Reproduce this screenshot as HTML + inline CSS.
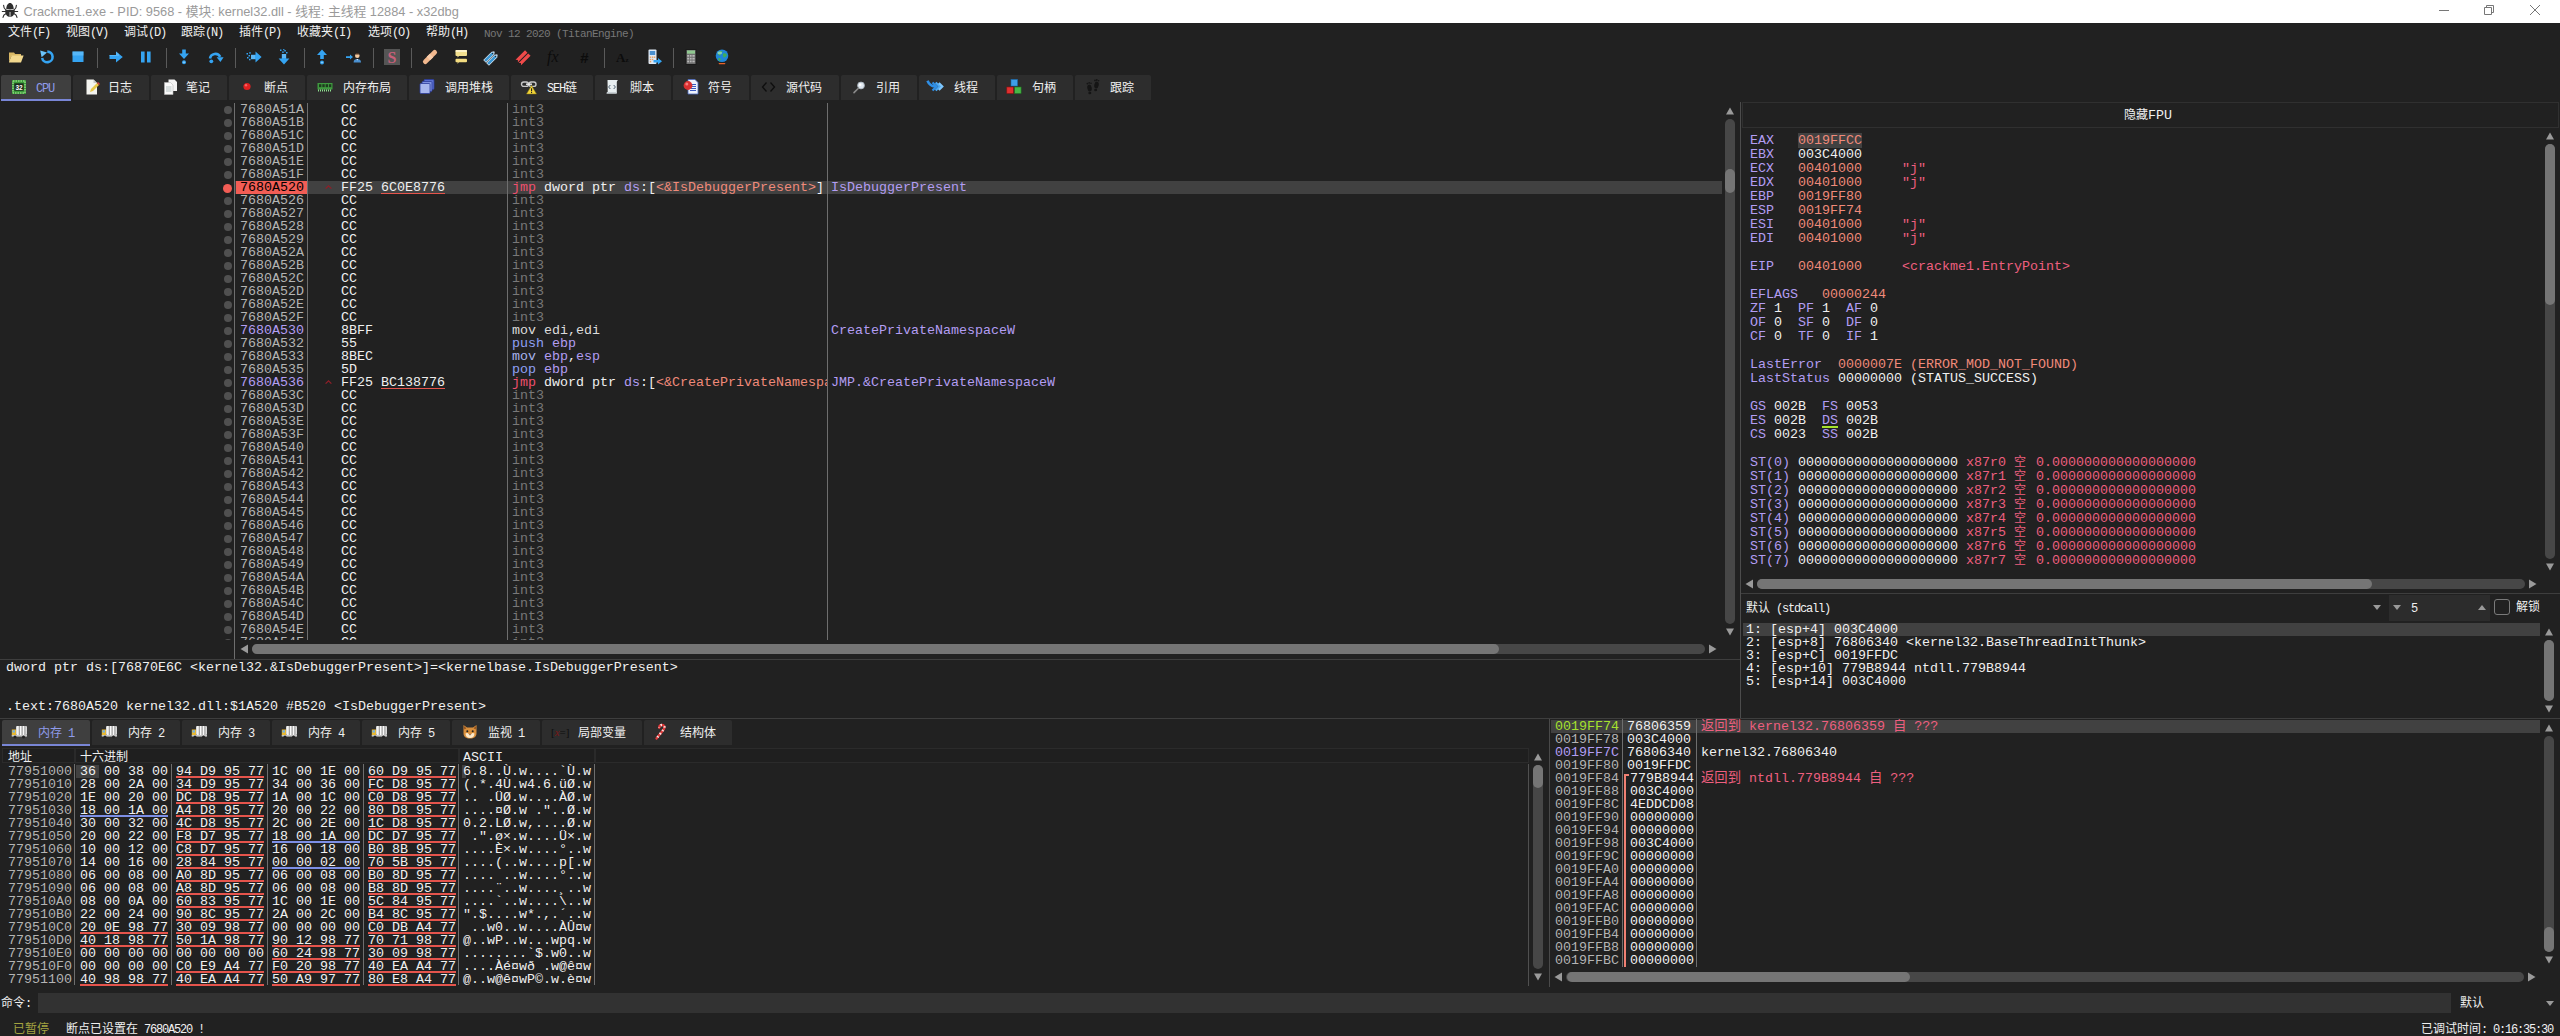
<!DOCTYPE html><html><head><meta charset="utf-8"><title>x32dbg</title><style>
*{box-sizing:border-box;margin:0;padding:0}
html,body{width:2560px;height:1036px;overflow:hidden;background:#212121}
body{position:relative;font-family:"Liberation Sans","Noto Sans CJK SC",sans-serif;font-size:12px;color:#f0f0f0}
.a{position:absolute}
.m{position:absolute;font-family:"Liberation Mono","Noto Sans CJK SC",monospace;font-size:13.333px;line-height:13px;height:13px;white-space:pre;color:#f0f0f0}
.r{position:absolute;font-family:"Liberation Mono","Noto Sans CJK SC",monospace;font-size:13.333px;line-height:14px;height:14px;white-space:pre;color:#f0f0f0}
.u{position:absolute;font-family:"Liberation Sans","Noto Sans CJK SC",sans-serif;font-size:12px;line-height:14px;white-space:pre;color:#f0f0f0}
.la{font-family:"Liberation Mono",monospace;font-size:12px;letter-spacing:-1.2px}
.mf{font-family:"Liberation Mono",monospace;font-size:13.333px}
.cj{font-family:"Noto Sans CJK SC",sans-serif;font-size:12px}
.g{color:#b4b4b4}.d{color:#787878}.p{color:#b39df3}.b{color:#8fa0f5}.k{color:#f0506e}.s{color:#f08a7a}.w{color:#f0f0f0}.pk{color:#ee5f7f}
.vl{position:absolute;width:1px;background:#6e6e6e}
.hl{position:absolute;height:1px;background:#3e3e3e}
.tab{position:absolute;height:25px;background:#2d2d2d;border-radius:2px 2px 0 0}
.tab.sel{background:#3f3f3f;border-bottom:2px solid #7986d6;height:26px}
.tab>span{position:absolute;top:6px;font-size:12px;line-height:14px;white-space:pre}
.sb{position:absolute;background:#474747;border-radius:5px}
.th{position:absolute;background:#757575;border-radius:5px}
.dot{position:absolute;width:7.500px;height:7.500px;border-radius:4px;background:#505050}
.ur{border-bottom:2px solid #e5544c}
.ub{border-bottom:2px solid #7d8fe6}
svg{position:absolute;overflow:visible}
</style></head><body>
<div class="a" style="left:0;top:0;width:2560px;height:23px;background:#fff"></div>
<svg style="left:0;top:0" width="20" height="23" viewBox="0 0 20 23"><path d="M6.3 9C6.3 5.600 8 3 10 3s3.700 2.600 3.700 6c-2.300 .5-5.100 .5-7.400 0z" fill="#2e2e2e"/><path d="M5.200 11c0-.8.500-1.300 1.100-1.300c2.400.5 5 .5 7.400 0c.6 0 1.100.5 1.100 1.300c0 3.500-2 5.800-4.800 5.800s-4.800-2.300-4.800-5.800z" fill="#2e2e2e"/><rect x="9.400" y="11.200" width="1.300" height="5.300" fill="#b0b0b0"/><g fill="none" stroke="#2e2e2e" stroke-width="1.100" stroke-linecap="round"><path d="M6 10C4.300 9 3.600 7 3.600 5.200M14 10c1.700-1 2.400-3 2.400-4.800M2.300 11.500h15.400M5.800 13.800C4 14.600 3.200 16 3 17.400M14.200 13.800c1.800.8 2.600 2.200 2.800 3.600"/></g></svg>
<div class="u" id="title" style="left:23.5px;top:3.800px;font-size:12.8px;line-height:16px;color:#9a9a9a">Crackme1.exe - PID: 9568 - 模块: kernel32.dll - 线程: 主线程 12884 - x32dbg</div>
<svg style="left:2420px;top:0" width="140" height="23" viewBox="0 0 140 23"><g stroke="#777" stroke-width="1" fill="none"><path d="M19 10.5h10"/><path d="M64.5 7.5h7v7h-7zM66.5 7.5v-2h7v7h-2"/><path d="M110 5l10 10M120 5l-10 10"/></g></svg>
<div class="u" style="left:8px;top:25px;line-height:15px">文件<span class="la">(F)</span></div>
<div class="u" style="left:66px;top:25px;line-height:15px">视图<span class="la">(V)</span></div>
<div class="u" style="left:124px;top:25px;line-height:15px">调试<span class="la">(D)</span></div>
<div class="u" style="left:181px;top:25px;line-height:15px">跟踪<span class="la">(N)</span></div>
<div class="u" style="left:239px;top:25px;line-height:15px">插件<span class="la">(P)</span></div>
<div class="u" style="left:297px;top:25px;line-height:15px">收藏夹<span class="la">(I)</span></div>
<div class="u" style="left:368px;top:25px;line-height:15px">选项<span class="la">(O)</span></div>
<div class="u" style="left:426px;top:25px;line-height:15px">帮助<span class="la">(H)</span></div>
<div class="u" style="left:484px;top:27px;line-height:14px;font-size:11px;color:#777;font-family:'Liberation Mono',monospace;letter-spacing:-0.6px">Nov 12 2020 (TitanEngine)</div>
<svg style="left:8px;top:49px" width="16" height="16" viewBox="0 0 16 16"><path d="M1 3.5h5l1.2 1.5H13v2H3.5L1 13z" fill="#d9b865"/><path d="M1 13L3.6 6.5H15.6L13 13.6H1z" fill="#f2d88e"/></svg>
<svg style="left:39px;top:49px" width="16" height="16" viewBox="0 0 16 16"><path d="M8.3 2.6a5.3 5.3 0 1 1-5.2 6.4" fill="none" stroke="#35a4f2" stroke-width="2.6"/><path d="M1.2 1.5L8 3.6L2.6 8.2z" fill="#6cc4fb"/></svg>
<svg style="left:70px;top:49px" width="16" height="16" viewBox="0 0 16 16"><rect x="2.5" y="2.5" width="11" height="10.5" fill="#35a4f2"/><rect x="2.5" y="2.5" width="11" height="4" fill="#6cc4fb" opacity=".6"/></svg>
<svg style="left:108px;top:49px" width="16" height="16" viewBox="0 0 16 16"><path d="M1.5 6h6.5V2.6L14.8 8L8 13.4V10H1.5z" fill="#35a4f2"/><path d="M1.5 6h6.5V2.6L11 5v2H1.5z" fill="#6cc4fb" opacity=".6"/></svg>
<svg style="left:138px;top:49px" width="16" height="16" viewBox="0 0 16 16"><rect x="3" y="2.5" width="3.6" height="11" fill="#35a4f2"/><rect x="9" y="2.5" width="3.6" height="11" fill="#35a4f2"/></svg>
<svg style="left:176px;top:49px" width="16" height="16" viewBox="0 0 16 16"><path d="M6.2 0.5h3.6v4h3.2L8 10L3 4.5h3.2z" fill="#35a4f2"/><circle cx="8" cy="13.2" r="2" fill="#35a4f2"/><circle cx="8" cy="13.2" r=".7" fill="#bfe6ff"/></svg>
<svg style="left:208px;top:49px" width="16" height="16" viewBox="0 0 16 16"><path d="M2 9.5a5.4 5.4 0 0 1 10.2-1.6" fill="none" stroke="#35a4f2" stroke-width="2.6"/><path d="M8.6 8.2h7L12.4 13z" fill="#35a4f2"/><circle cx="3.3" cy="12.3" r="1.9" fill="#35a4f2"/></svg>
<svg style="left:246px;top:49px" width="16" height="16" viewBox="0 0 16 16"><path d="M5 5.8h4.5V2.6L15.6 8L9.5 13.4V10.2H5z" fill="#35a4f2"/><g fill="#35a4f2"><rect x="0.5" y="4" width="1.5" height="1.5"/><rect x="2.5" y="6" width="1.5" height="1.5"/><rect x="1" y="8" width="1.5" height="1.5"/><rect x="3" y="9.8" width="1.5" height="1.5"/><rect x="3.2" y="3.2" width="1.5" height="1.5"/></g><g fill="#d6efff"><rect x="5.5" y="6.5" width="1" height="1"/><rect x="7.5" y="6.5" width="1" height="1"/><rect x="5.5" y="8.5" width="1" height="1"/><rect x="7.5" y="8.5" width="1" height="1"/></g></svg>
<svg style="left:276px;top:49px" width="16" height="16" viewBox="0 0 16 16"><path d="M5.8 5h4.4v4.5h3.2L8 15.6L2.6 9.5h3.2z" fill="#35a4f2"/><g fill="#35a4f2"><rect x="4" y="0.5" width="1.5" height="1.5"/><rect x="6.2" y="2.4" width="1.5" height="1.5"/><rect x="8.3" y="1" width="1.5" height="1.5"/><rect x="10" y="3" width="1.5" height="1.5"/><rect x="7.2" y="0" width="1.2" height="1.2"/></g><g fill="#d6efff"><rect x="6.5" y="5.5" width="1" height="1"/><rect x="8.5" y="5.5" width="1" height="1"/><rect x="6.5" y="7.5" width="1" height="1"/><rect x="8.5" y="7.5" width="1" height="1"/></g></svg>
<svg style="left:314px;top:49px" width="16" height="16" viewBox="0 0 16 16"><path d="M6.2 10h3.6V6h3.2L8 0.5L3 6h3.2z" fill="#35a4f2"/><circle cx="8" cy="13.4" r="2" fill="#35a4f2"/><circle cx="8" cy="13.4" r=".7" fill="#bfe6ff"/></svg>
<svg style="left:346px;top:49px" width="16" height="16" viewBox="0 0 16 16"><path d="M0 7.300h4V5.600L7 8.100L4 10.600V8.900H0z" fill="#35a4f2"/><circle cx="11.300" cy="6.800" r="2.300" fill="#f3c9a0"/><path d="M9.200 5.600a2.200 2.200 0 0 1 4.200 0z" fill="#4a3020"/><path d="M7.600 13.400c0-2.700 1.600-3.500 3.700-3.500s3.700.8 3.700 3.500z" fill="#4a90d0"/><path d="M10.500 10l.8 1.500l.8-1.500z" fill="#fff"/></svg>
<svg style="left:384px;top:49px" width="16" height="16" viewBox="0 0 16 16"><rect x="0" y="0" width="16" height="16" fill="#555"/><text x="8" y="13.500" text-anchor="middle" font-family="Liberation Serif,serif" font-weight="bold" font-size="16" fill="#c8607a">S</text></svg>
<svg style="left:422px;top:49px" width="16" height="16" viewBox="0 0 16 16"><g transform="rotate(-45 8 8)"><rect x="-1" y="5.600" width="18" height="4.800" rx="2.400" fill="#f2b88e"/><rect x="5.800" y="5.600" width="4.400" height="4.800" fill="#f8ccaa"/></g></svg>
<svg style="left:453px;top:49px" width="16" height="16" viewBox="0 0 16 16"><rect x="2.500" y="1" width="11.500" height="6" rx="1" fill="#f3e08e"/><rect x="2.500" y="1" width="11.500" height="2" rx="1" fill="#fdf3c8"/><path d="M4.500 7v1.600l1.600-1.600z" fill="#f3e08e"/><rect x="2.500" y="9.800" width="11.500" height="3.400" rx="1" fill="#f3dc80"/><path d="M4.500 13.200v1.600l1.600-1.600z" fill="#f3dc80"/></svg>
<svg style="left:484px;top:49px" width="16" height="16" viewBox="0 0 16 16"><g transform="rotate(-45 8 8)"><path d="M0 4.300h11l2.200 1.600l-2.200 1.600h-11z" fill="#3b97d3" stroke="#eef7ff" stroke-width=".8"/><path d="M0 8.500h11l2.200 1.600l-2.200 1.600h-11z" fill="#3b97d3" stroke="#eef7ff" stroke-width=".8"/><circle cx="11" cy="5.900" r=".6" fill="#222"/><circle cx="11" cy="10.100" r=".6" fill="#222"/></g></svg>
<svg style="left:516px;top:49px" width="16" height="16" viewBox="0 0 16 16"><g transform="rotate(-45 8 8)"><path d="M0 4h13.500v3.400h-13.500l1.600-1.700z" fill="#f04a4a"/><path d="M0 8.400h13.500v3.400h-13.500l1.600-1.700z" fill="#f04a4a"/></g></svg>
<svg style="left:547px;top:49px" width="16" height="16" viewBox="0 0 16 16"><text x="0" y="13" font-family="Liberation Serif,serif" font-style="italic" font-size="16" fill="#0c0c0c">fx</text></svg>
<svg style="left:578px;top:49px" width="16" height="16" viewBox="0 0 16 16"><text x="2" y="13.5" font-family="Liberation Sans,sans-serif" font-style="italic" font-weight="bold" font-size="15" fill="#0c0c0c">#</text></svg>
<svg style="left:615px;top:49px" width="16" height="16" viewBox="0 0 16 16"><text x="1" y="12.5" font-family="Liberation Serif,serif" font-weight="bold" font-size="13" fill="#0c0c0c">A</text><text x="10.5" y="12.5" font-family="Liberation Serif,serif" font-weight="bold" font-size="7" fill="#0c0c0c">z</text></svg>
<svg style="left:646px;top:49px" width="16" height="16" viewBox="0 0 16 16"><rect x="2.5" y="0.5" width="8" height="14.5" rx="1" fill="#dfe9f5"/><rect x="3.8" y="2" width="5.4" height="4" fill="#4a90d0"/><g fill="#e8a060"><rect x="3.8" y="7.5" width="1.4" height="1.4"/><rect x="5.9" y="7.5" width="1.4" height="1.4"/><rect x="7.9" y="7.5" width="1.4" height="1.4"/><rect x="3.8" y="9.8" width="1.4" height="1.4"/><rect x="5.9" y="9.8" width="1.4" height="1.4"/><rect x="3.8" y="12" width="1.4" height="1.4"/></g><path d="M7.5 11h4.5V9l4 3.3l-4 3.3v-2H7.5z" fill="#35a4f2"/></svg>
<svg style="left:683px;top:49px" width="16" height="16" viewBox="0 0 16 16"><rect x="3" y="0.500" width="10" height="15" fill="#707070" stroke="#1a1a1a" stroke-width="1"/><rect x="4" y="1.500" width="8" height="3.200" fill="#8fc890"/><g fill="#b8b8b8"><rect x="4.200" y="6" width="1.800" height="1.700"/><rect x="6.800" y="6" width="1.800" height="1.700"/><rect x="9.400" y="6" width="2.300" height="1.700"/><rect x="4.200" y="8.800" width="1.800" height="1.700"/><rect x="6.800" y="8.800" width="1.800" height="1.700"/><rect x="9.400" y="8.800" width="2.300" height="1.700"/><rect x="4.200" y="11.600" width="1.800" height="1.700"/><rect x="6.800" y="11.600" width="1.800" height="1.700"/><rect x="9.400" y="11.600" width="2.300" height="1.700"/></g></svg>
<svg style="left:714px;top:49px" width="16" height="16" viewBox="0 0 16 16"><circle cx="8" cy="6.800" r="6.300" fill="#1f86d8"/><path d="M3.500 4c1.500-2 3.500-2.300 5-1.600c-.3 1.700-1.500 2.200-2.300 3.500c-.7 1.100-2 .5-2.700-1.900zM9.300 4.600c1.300-.7 2.800 0 3.700 1.400c-.8 1.700-1.900 2.700-3.300 2.400c-1-1-1.100-2.700-.4-3.800zM4.500 9c1-.4 2 .2 2.500 1.300c-.3.900-1 1.500-1.900 1.600c-.8-.8-1-1.900-.6-2.900z" fill="#3fae5a"/><ellipse cx="5.800" cy="4" rx="2.400" ry="1.400" fill="#cfeeff" opacity=".5"/><rect x="4.600" y="13.900" width="6.800" height="1.400" rx=".7" fill="#e8622a"/></svg>
<div class="a" style="left:97px;top:48px;width:1px;height:20px;background:#5a5a5a"></div>
<div class="a" style="left:166px;top:48px;width:1px;height:20px;background:#5a5a5a"></div>
<div class="a" style="left:235px;top:48px;width:1px;height:20px;background:#5a5a5a"></div>
<div class="a" style="left:304px;top:48px;width:1px;height:20px;background:#5a5a5a"></div>
<div class="a" style="left:373px;top:48px;width:1px;height:20px;background:#5a5a5a"></div>
<div class="a" style="left:411px;top:48px;width:1px;height:20px;background:#5a5a5a"></div>
<div class="a" style="left:604px;top:48px;width:1px;height:20px;background:#5a5a5a"></div>
<div class="a" style="left:673px;top:48px;width:1px;height:20px;background:#5a5a5a"></div>
<div class="tab sel" style="left:1px;top:75px;width:70px"><span style="left:35px;color:#8f9bea"><span class="la">CPU</span></span></div>
<div class="tab" style="left:73px;top:75px;width:76px"><span style="left:35px;color:#f0f0f0">日志</span></div>
<div class="tab" style="left:151px;top:75px;width:76px"><span style="left:35px;color:#f0f0f0">笔记</span></div>
<div class="tab" style="left:229px;top:75px;width:76px"><span style="left:35px;color:#f0f0f0">断点</span></div>
<div class="tab" style="left:307px;top:75px;width:100px"><span style="left:36px;color:#f0f0f0">内存布局</span></div>
<div class="tab" style="left:409px;top:75px;width:100px"><span style="left:36px;color:#f0f0f0">调用堆栈</span></div>
<div class="tab" style="left:511px;top:75px;width:82px"><span style="left:36px;color:#f0f0f0"><span class="la">SEH</span>链</span></div>
<div class="tab" style="left:595px;top:75px;width:76px"><span style="left:35px;color:#f0f0f0">脚本</span></div>
<div class="tab" style="left:673px;top:75px;width:76px"><span style="left:35px;color:#f0f0f0">符号</span></div>
<div class="tab" style="left:751px;top:75px;width:88px"><span style="left:35px;color:#f0f0f0">源代码</span></div>
<div class="tab" style="left:841px;top:75px;width:76px"><span style="left:35px;color:#f0f0f0">引用</span></div>
<div class="tab" style="left:919px;top:75px;width:76px"><span style="left:35px;color:#f0f0f0">线程</span></div>
<div class="tab" style="left:997px;top:75px;width:76px"><span style="left:35px;color:#f0f0f0">句柄</span></div>
<div class="tab" style="left:1075px;top:75px;width:76px"><span style="left:35px;color:#f0f0f0">跟踪</span></div>
<svg style="left:11px;top:79px" width="16" height="16" viewBox="0 0 16 16"><rect x="1" y="1" width="14" height="14" fill="#3a9a3a"/><rect x="2" y="2" width="12" height="12" fill="none" stroke="#b8f0a0" stroke-width="1" stroke-dasharray="1.5 1"/><rect x="3.3" y="4.3" width="9.4" height="7.4" fill="#1c2a1c"/><text x="8" y="10.6" text-anchor="middle" font-family="Liberation Sans,sans-serif" font-weight="bold" font-size="6.5" fill="#fff">32</text></svg>
<svg style="left:84px;top:79px" width="16" height="16" viewBox="0 0 16 16"><path d="M2.5 0.5h7l3.5 3.5v11.5h-10.5z" fill="#f4f4f0"/><path d="M9.5 0.5v3.5h3.5z" fill="#c8c8c8"/><path d="M6 13l1-3l6-6l2 2l-6 6z" fill="#e8c84a"/><path d="M13 4l1-1l2 2l-1 1z" fill="#d84040"/></svg>
<svg style="left:163px;top:79px" width="16" height="16" viewBox="0 0 16 16"><path d="M5.5 0.5h6l2.5 2.5v9h-8.5z" fill="#f4f4f4"/><path d="M1.5 3.5h6l2.5 2.5v9.5h-8.5z" fill="#fafafa" stroke="#bbb" stroke-width=".6"/><g stroke="#9aa" stroke-width=".7"><path d="M3 8h5.5M3 10h5.5M3 12h5.5"/></g></svg>
<svg style="left:239px;top:79px" width="16" height="16" viewBox="0 0 16 16"><circle cx="8" cy="7.5" r="3.6" fill="#e02020"/><circle cx="7" cy="6.3" r="1.2" fill="#ff8080" opacity=".7"/></svg>
<svg style="left:317px;top:79px" width="16" height="16" viewBox="0 0 16 16"><rect x="0.5" y="4" width="15" height="6.5" fill="#3f9a3f"/><g fill="#1e3a1e"><rect x="2" y="5.2" width="2.4" height="3"/><rect x="5.3" y="5.2" width="2.4" height="3"/><rect x="8.6" y="5.2" width="2.4" height="3"/><rect x="11.9" y="5.2" width="2.4" height="3"/></g><g fill="#8fe08f"><rect x="1" y="10.5" width="1" height="2"/><rect x="3" y="10.5" width="1" height="2"/><rect x="5" y="10.5" width="1" height="2"/><rect x="7" y="10.5" width="1" height="2"/><rect x="9" y="10.5" width="1" height="2"/><rect x="11" y="10.5" width="1" height="2"/><rect x="13" y="10.5" width="1" height="2"/></g></svg>
<svg style="left:419px;top:79px" width="16" height="16" viewBox="0 0 16 16"><rect x="5" y="0.5" width="10" height="10" rx="1" fill="#5a6fd0" stroke="#2c3c9c" stroke-width=".8"/><rect x="3" y="2.5" width="10" height="10" rx="1" fill="#7f92e0" stroke="#2c3c9c" stroke-width=".8"/><rect x="1" y="4.5" width="10" height="10" rx="1" fill="#a9b8ee" stroke="#2c3c9c" stroke-width=".8"/></svg>
<svg style="left:521px;top:79px" width="16" height="16" viewBox="0 0 16 16"><rect x="0.5" y="3" width="7" height="4.4" rx="2.2" fill="none" stroke="#c8c8c8" stroke-width="1.4"/><rect x="8" y="3" width="7" height="4.4" rx="2.2" fill="none" stroke="#c8c8c8" stroke-width="1.4"/><path d="M5 5.2h6" stroke="#eee" stroke-width="1.4"/><path d="M10.5 6.5L15.5 15h-10z" fill="#f2d43a" stroke="#8a7a10" stroke-width=".5"/><rect x="10" y="9.3" width="1.1" height="3" fill="#222"/><rect x="10" y="13" width="1.1" height="1.1" fill="#222"/></svg>
<svg style="left:604px;top:79px" width="16" height="16" viewBox="0 0 16 16"><path d="M3.5 1h10.5c-1.2.8-1.2 2 -1.2 3v10.5h-10c1-.8 .9-1.6.9-2.5z" fill="#e8eef0"/><path d="M1.5 14.5h10.5c.8 0 1-.8.8-1.5h-10c.3.8-.3 1.5-1.3 1.5z" fill="#c8d0d4"/><path d="M6.3 6L4.6 8l1.7 2M9.7 6l1.7 2l-1.7 2" fill="none" stroke="#506070" stroke-width="1"/></svg>
<svg style="left:683px;top:79px" width="16" height="16" viewBox="0 0 16 16"><path d="M5 0.5h7l3 3v11.5h-10z" fill="#eef2fb" stroke="#4a6ac0" stroke-width=".8"/><g stroke="#3a5ac0" stroke-width="1"><path d="M8 5.5h5M8 7.5h5M8 9.5h5M7 11.5h6"/></g><circle cx="5" cy="6.5" r="4.4" fill="#d83030"/><circle cx="3.8" cy="5" r="1.5" fill="#ff9090" opacity=".8"/></svg>
<svg style="left:761px;top:79px" width="16" height="16" viewBox="0 0 16 16"><path d="M5.500 3.500L1.500 8L5.500 12.500M9.500 3.500L13.500 8L9.500 12.500" fill="none" stroke="#0e0e0e" stroke-width="1.300"/></svg>
<svg style="left:851px;top:79px" width="16" height="16" viewBox="0 0 16 16"><circle cx="10" cy="6.500" r="3.400" fill="#dfe8f0" stroke="#aab4be" stroke-width=".9"/><circle cx="9.200" cy="5.700" r="1.300" fill="#fff"/><path d="M7.400 9.200L3 13.600" stroke="#8a8a8a" stroke-width="1.600" stroke-linecap="round"/></svg>
<svg style="left:927px;top:79px" width="16" height="16" viewBox="0 0 16 16"><path d="M0.500 1.800C2 5.500 4.500 7.200 8 7.500" fill="none" stroke="#2f8fe6" stroke-width="2.600"/><g fill="none" stroke-width="2.200"><path d="M5.500 3.500L9.500 7.500L5.500 11.500" stroke="#2f8fe6"/><path d="M8.700 3.500L12.700 7.500L8.700 11.500" stroke="#49a8f5"/><path d="M11.800 4L15.300 7.500L11.800 11" stroke="#7cc6ff"/></g></svg>
<svg style="left:1006px;top:79px" width="16" height="16" viewBox="0 0 16 16"><rect x="5" y="0.5" width="6.5" height="6.5" fill="#3f9fe8" stroke="#1a6ab0" stroke-width=".6"/><rect x="0.8" y="8" width="6.5" height="6.5" fill="#e03030" stroke="#901010" stroke-width=".6"/><rect x="8.6" y="8" width="6.5" height="6.5" fill="#48b848" stroke="#207020" stroke-width=".6"/></svg>
<svg style="left:1085px;top:79px" width="16" height="16" viewBox="0 0 16 16"><g fill="#151515"><ellipse cx="4.5" cy="9" rx="2.2" ry="3.4" transform="rotate(-12 4.5 9)"/><ellipse cx="4.8" cy="14" rx="1.5" ry="1.2"/><circle cx="2.4" cy="4.6" r=".9"/><circle cx="4.2" cy="3.8" r=".9"/><circle cx="6" cy="4.2" r=".8"/><ellipse cx="11.5" cy="6" rx="2.2" ry="3.4" transform="rotate(12 11.5 6)"/><ellipse cx="10.6" cy="11" rx="1.5" ry="1.2"/><circle cx="10" cy="1.4" r=".9"/><circle cx="11.8" cy="1" r=".9"/><circle cx="13.6" cy="1.8" r=".8"/></g></svg>
<div class="a" id="dis" style="left:0;top:103px;width:1722px;height:537px;overflow:hidden">
<div class="a" style="left:234px;top:78px;width:1488px;height:13px;background:#414141"></div>
<div class="a" style="left:236px;top:78px;width:71px;height:13px;background:#f25d55"></div>
<div class="vl" style="left:234px;top:0;height:537px"></div>
<div class="vl" style="left:307px;top:0;height:537px"></div>
<div class="vl" style="left:507px;top:0;height:537px"></div>
<div class="vl" style="left:827px;top:0;height:537px"></div>
<div class="a" style="left:508px;top:0;width:319px;height:537px;overflow:hidden">
<div class="m d" style="left:4px;top:0px">int3</div>
<div class="m d" style="left:4px;top:13px">int3</div>
<div class="m d" style="left:4px;top:26px">int3</div>
<div class="m d" style="left:4px;top:39px">int3</div>
<div class="m d" style="left:4px;top:52px">int3</div>
<div class="m d" style="left:4px;top:65px">int3</div>
<div class="m w" style="left:4px;top:78px"><span class="k">jmp</span> dword ptr <span class="p">ds</span>:[<span class="s">&lt;&amp;IsDebuggerPresent&gt;</span>]</div>
<div class="m d" style="left:4px;top:91px">int3</div>
<div class="m d" style="left:4px;top:104px">int3</div>
<div class="m d" style="left:4px;top:117px">int3</div>
<div class="m d" style="left:4px;top:130px">int3</div>
<div class="m d" style="left:4px;top:143px">int3</div>
<div class="m d" style="left:4px;top:156px">int3</div>
<div class="m d" style="left:4px;top:169px">int3</div>
<div class="m d" style="left:4px;top:182px">int3</div>
<div class="m d" style="left:4px;top:195px">int3</div>
<div class="m d" style="left:4px;top:208px">int3</div>
<div class="m w" style="left:4px;top:221px"><span style="color:#dcdcdc">mov edi,edi</span></div>
<div class="m w" style="left:4px;top:234px"><span class="b">push</span> <span class="p">ebp</span></div>
<div class="m w" style="left:4px;top:247px"><span style="color:#a9b4ee">mov</span> <span class="p">ebp</span>,<span class="p">esp</span></div>
<div class="m w" style="left:4px;top:260px"><span class="b">pop</span> <span class="p">ebp</span></div>
<div class="m w" style="left:4px;top:273px"><span class="k">jmp</span> dword ptr <span class="p">ds</span>:[<span class="s">&lt;&amp;CreatePrivateNamespaceW&gt;</span>]</div>
<div class="m d" style="left:4px;top:286px">int3</div>
<div class="m d" style="left:4px;top:299px">int3</div>
<div class="m d" style="left:4px;top:312px">int3</div>
<div class="m d" style="left:4px;top:325px">int3</div>
<div class="m d" style="left:4px;top:338px">int3</div>
<div class="m d" style="left:4px;top:351px">int3</div>
<div class="m d" style="left:4px;top:364px">int3</div>
<div class="m d" style="left:4px;top:377px">int3</div>
<div class="m d" style="left:4px;top:390px">int3</div>
<div class="m d" style="left:4px;top:403px">int3</div>
<div class="m d" style="left:4px;top:416px">int3</div>
<div class="m d" style="left:4px;top:429px">int3</div>
<div class="m d" style="left:4px;top:442px">int3</div>
<div class="m d" style="left:4px;top:455px">int3</div>
<div class="m d" style="left:4px;top:468px">int3</div>
<div class="m d" style="left:4px;top:481px">int3</div>
<div class="m d" style="left:4px;top:494px">int3</div>
<div class="m d" style="left:4px;top:507px">int3</div>
<div class="m d" style="left:4px;top:520px">int3</div>
<div class="m d" style="left:4px;top:533px">int3</div>
</div>
<div class="dot" style="left:224px;top:3px"></div>
<div class="m g" style="left:240px;top:0px">7680A51A</div>
<div class="m" style="left:341px;top:0px">CC</div>
<div class="dot" style="left:224px;top:16px"></div>
<div class="m g" style="left:240px;top:13px">7680A51B</div>
<div class="m" style="left:341px;top:13px">CC</div>
<div class="dot" style="left:224px;top:29px"></div>
<div class="m g" style="left:240px;top:26px">7680A51C</div>
<div class="m" style="left:341px;top:26px">CC</div>
<div class="dot" style="left:224px;top:42px"></div>
<div class="m g" style="left:240px;top:39px">7680A51D</div>
<div class="m" style="left:341px;top:39px">CC</div>
<div class="dot" style="left:224px;top:55px"></div>
<div class="m g" style="left:240px;top:52px">7680A51E</div>
<div class="m" style="left:341px;top:52px">CC</div>
<div class="dot" style="left:224px;top:68px"></div>
<div class="m g" style="left:240px;top:65px">7680A51F</div>
<div class="m" style="left:341px;top:65px">CC</div>
<div class="dot" style="left:223px;top:81px;width:9px;height:9px;border-radius:5px;background:#f25d55"></div>
<div class="m" style="left:240px;top:78px;color:#000">7680A520</div>
<div class="a" style="left:381px;top:90px;width:64px;height:1px;background:#e5544c"></div>
<div class="m" style="left:341px;top:78px">FF25 6C0E8776</div>
<svg style="left:325px;top:82px" width="7" height="4" viewBox="0 0 7 4"><path d="M0.600 3.600L3.500 0.800L6.400 3.600" fill="none" stroke="#8f1f28" stroke-width="1.300"/></svg>
<div class="m p" style="left:831px;top:78px">IsDebuggerPresent</div>
<div class="dot" style="left:224px;top:94px"></div>
<div class="m g" style="left:240px;top:91px">7680A526</div>
<div class="m" style="left:341px;top:91px">CC</div>
<div class="dot" style="left:224px;top:107px"></div>
<div class="m g" style="left:240px;top:104px">7680A527</div>
<div class="m" style="left:341px;top:104px">CC</div>
<div class="dot" style="left:224px;top:120px"></div>
<div class="m g" style="left:240px;top:117px">7680A528</div>
<div class="m" style="left:341px;top:117px">CC</div>
<div class="dot" style="left:224px;top:133px"></div>
<div class="m g" style="left:240px;top:130px">7680A529</div>
<div class="m" style="left:341px;top:130px">CC</div>
<div class="dot" style="left:224px;top:146px"></div>
<div class="m g" style="left:240px;top:143px">7680A52A</div>
<div class="m" style="left:341px;top:143px">CC</div>
<div class="dot" style="left:224px;top:159px"></div>
<div class="m g" style="left:240px;top:156px">7680A52B</div>
<div class="m" style="left:341px;top:156px">CC</div>
<div class="dot" style="left:224px;top:172px"></div>
<div class="m g" style="left:240px;top:169px">7680A52C</div>
<div class="m" style="left:341px;top:169px">CC</div>
<div class="dot" style="left:224px;top:185px"></div>
<div class="m g" style="left:240px;top:182px">7680A52D</div>
<div class="m" style="left:341px;top:182px">CC</div>
<div class="dot" style="left:224px;top:198px"></div>
<div class="m g" style="left:240px;top:195px">7680A52E</div>
<div class="m" style="left:341px;top:195px">CC</div>
<div class="dot" style="left:224px;top:211px"></div>
<div class="m g" style="left:240px;top:208px">7680A52F</div>
<div class="m" style="left:341px;top:208px">CC</div>
<div class="dot" style="left:224px;top:224px"></div>
<div class="m p" style="left:240px;top:221px">7680A530</div>
<div class="m" style="left:341px;top:221px">8BFF</div>
<div class="m p" style="left:831px;top:221px">CreatePrivateNamespaceW</div>
<div class="dot" style="left:224px;top:237px"></div>
<div class="m g" style="left:240px;top:234px">7680A532</div>
<div class="m" style="left:341px;top:234px">55</div>
<div class="dot" style="left:224px;top:250px"></div>
<div class="m g" style="left:240px;top:247px">7680A533</div>
<div class="m" style="left:341px;top:247px">8BEC</div>
<div class="dot" style="left:224px;top:263px"></div>
<div class="m g" style="left:240px;top:260px">7680A535</div>
<div class="m" style="left:341px;top:260px">5D</div>
<div class="dot" style="left:224px;top:276px"></div>
<div class="m p" style="left:240px;top:273px">7680A536</div>
<div class="a" style="left:381px;top:285px;width:64px;height:1px;background:#e5544c"></div>
<div class="m" style="left:341px;top:273px">FF25 BC138776</div>
<svg style="left:325px;top:277px" width="7" height="4" viewBox="0 0 7 4"><path d="M0.600 3.600L3.500 0.800L6.400 3.600" fill="none" stroke="#8f1f28" stroke-width="1.300"/></svg>
<div class="m p" style="left:831px;top:273px">JMP.&amp;CreatePrivateNamespaceW</div>
<div class="dot" style="left:224px;top:289px"></div>
<div class="m g" style="left:240px;top:286px">7680A53C</div>
<div class="m" style="left:341px;top:286px">CC</div>
<div class="dot" style="left:224px;top:302px"></div>
<div class="m g" style="left:240px;top:299px">7680A53D</div>
<div class="m" style="left:341px;top:299px">CC</div>
<div class="dot" style="left:224px;top:315px"></div>
<div class="m g" style="left:240px;top:312px">7680A53E</div>
<div class="m" style="left:341px;top:312px">CC</div>
<div class="dot" style="left:224px;top:328px"></div>
<div class="m g" style="left:240px;top:325px">7680A53F</div>
<div class="m" style="left:341px;top:325px">CC</div>
<div class="dot" style="left:224px;top:341px"></div>
<div class="m g" style="left:240px;top:338px">7680A540</div>
<div class="m" style="left:341px;top:338px">CC</div>
<div class="dot" style="left:224px;top:354px"></div>
<div class="m g" style="left:240px;top:351px">7680A541</div>
<div class="m" style="left:341px;top:351px">CC</div>
<div class="dot" style="left:224px;top:367px"></div>
<div class="m g" style="left:240px;top:364px">7680A542</div>
<div class="m" style="left:341px;top:364px">CC</div>
<div class="dot" style="left:224px;top:380px"></div>
<div class="m g" style="left:240px;top:377px">7680A543</div>
<div class="m" style="left:341px;top:377px">CC</div>
<div class="dot" style="left:224px;top:393px"></div>
<div class="m g" style="left:240px;top:390px">7680A544</div>
<div class="m" style="left:341px;top:390px">CC</div>
<div class="dot" style="left:224px;top:406px"></div>
<div class="m g" style="left:240px;top:403px">7680A545</div>
<div class="m" style="left:341px;top:403px">CC</div>
<div class="dot" style="left:224px;top:419px"></div>
<div class="m g" style="left:240px;top:416px">7680A546</div>
<div class="m" style="left:341px;top:416px">CC</div>
<div class="dot" style="left:224px;top:432px"></div>
<div class="m g" style="left:240px;top:429px">7680A547</div>
<div class="m" style="left:341px;top:429px">CC</div>
<div class="dot" style="left:224px;top:445px"></div>
<div class="m g" style="left:240px;top:442px">7680A548</div>
<div class="m" style="left:341px;top:442px">CC</div>
<div class="dot" style="left:224px;top:458px"></div>
<div class="m g" style="left:240px;top:455px">7680A549</div>
<div class="m" style="left:341px;top:455px">CC</div>
<div class="dot" style="left:224px;top:471px"></div>
<div class="m g" style="left:240px;top:468px">7680A54A</div>
<div class="m" style="left:341px;top:468px">CC</div>
<div class="dot" style="left:224px;top:484px"></div>
<div class="m g" style="left:240px;top:481px">7680A54B</div>
<div class="m" style="left:341px;top:481px">CC</div>
<div class="dot" style="left:224px;top:497px"></div>
<div class="m g" style="left:240px;top:494px">7680A54C</div>
<div class="m" style="left:341px;top:494px">CC</div>
<div class="dot" style="left:224px;top:510px"></div>
<div class="m g" style="left:240px;top:507px">7680A54D</div>
<div class="m" style="left:341px;top:507px">CC</div>
<div class="dot" style="left:224px;top:523px"></div>
<div class="m g" style="left:240px;top:520px">7680A54E</div>
<div class="m" style="left:341px;top:520px">CC</div>
<div class="dot" style="left:224px;top:536px"></div>
<div class="m g" style="left:240px;top:533px">7680A54F</div>
<div class="m" style="left:341px;top:533px">CC</div>
</div>
<svg style="left:1725px;top:107px" width="10" height="8" viewBox="0 0 10 8"><path d="M5 0.5L9 7.5H1z" fill="#9a9a9a"/></svg>
<div class="sb" style="left:1725px;top:119px;width:10px;height:505px"></div>
<div class="th" style="left:1725px;top:169px;width:10px;height:24px"></div>
<svg style="left:1725px;top:628px" width="10" height="8" viewBox="0 0 10 8"><path d="M5 7.5L9 0.5H1z" fill="#9a9a9a"/></svg>
<svg style="left:240px;top:644px" width="8" height="10" viewBox="0 0 8 10"><path d="M0.5 5L8 0.5V9.5z" fill="#9a9a9a"/></svg>
<div class="sb" style="left:252px;top:644px;width:1453px;height:10px"></div>
<div class="th" style="left:252px;top:644px;width:1247px;height:10px"></div>
<svg style="left:1709px;top:644px" width="8" height="10" viewBox="0 0 8 10"><path d="M7.5 5L0 0.5V9.5z" fill="#9a9a9a"/></svg>
<div class="vl" style="left:234px;top:640px;height:19px"></div>
<div class="hl" style="left:0;top:659px;width:1741px"></div>
<div class="hl" style="left:0;top:718px;width:2560px"></div>
<div class="a" style="left:1740px;top:102px;width:1px;height:616px;background:#4c4c4c"></div>
<div class="m" style="left:6px;top:661px">dword ptr ds:[76870E6C &lt;kernel32.&amp;IsDebuggerPresent&gt;]=&lt;kernelbase.IsDebuggerPresent&gt;</div>
<div class="m" style="left:6px;top:700px">.text:7680A520 kernel32.dll:$1A520 #B520 &lt;IsDebuggerPresent&gt;</div>
<div class="tab sel" style="left:2px;top:720px;width:88px"><span style="left:36px;color:#8f9bea">内存<span class="la"> 1</span></span></div>
<div class="tab" style="left:92px;top:720px;width:88px"><span style="left:36px;color:#f0f0f0">内存<span class="la"> 2</span></span></div>
<div class="tab" style="left:182px;top:720px;width:88px"><span style="left:36px;color:#f0f0f0">内存<span class="la"> 3</span></span></div>
<div class="tab" style="left:272px;top:720px;width:88px"><span style="left:36px;color:#f0f0f0">内存<span class="la"> 4</span></span></div>
<div class="tab" style="left:362px;top:720px;width:88px"><span style="left:36px;color:#f0f0f0">内存<span class="la"> 5</span></span></div>
<div class="tab" style="left:452px;top:720px;width:88px"><span style="left:36px;color:#f0f0f0">监视<span class="la"> 1</span></span></div>
<div class="tab" style="left:542px;top:720px;width:100px"><span style="left:36px;color:#f0f0f0">局部变量</span></div>
<div class="tab" style="left:644px;top:720px;width:88px"><span style="left:36px;color:#f0f0f0">结构体</span></div>
<svg style="left:11px;top:724px" width="16" height="16" viewBox="0 0 16 16"><rect x="5" y="2" width="11" height="9" rx="1" fill="#d8d8d8"/><g fill="#fafafa"><rect x="6.2" y="2" width="1.5" height="9"/><rect x="9" y="2" width="1.5" height="9"/><rect x="11.8" y="2" width="1.5" height="9"/></g><g fill="#9a9a9a"><rect x="7.8" y="2" width="1" height="9"/><rect x="10.6" y="2" width="1" height="9"/><rect x="13.4" y="2" width="1" height="9"/></g><path d="M0.8 5.5h4.2v6.500h-4.2z" fill="#e8b830"/><rect x="1.500" y="6.300" width="2.400" height="2.200" fill="#6ab0e8"/><rect x="0.800" y="11" width="15.200" height="1.600" fill="#c8c8c8"/><circle cx="4" cy="13" r="1.500" fill="#222"/><circle cx="12.500" cy="13" r="1.500" fill="#222"/></svg>
<svg style="left:101px;top:724px" width="16" height="16" viewBox="0 0 16 16"><rect x="5" y="2" width="11" height="9" rx="1" fill="#d8d8d8"/><g fill="#fafafa"><rect x="6.2" y="2" width="1.5" height="9"/><rect x="9" y="2" width="1.5" height="9"/><rect x="11.8" y="2" width="1.5" height="9"/></g><g fill="#9a9a9a"><rect x="7.8" y="2" width="1" height="9"/><rect x="10.6" y="2" width="1" height="9"/><rect x="13.4" y="2" width="1" height="9"/></g><path d="M0.8 5.5h4.2v6.500h-4.2z" fill="#e8b830"/><rect x="1.500" y="6.300" width="2.400" height="2.200" fill="#6ab0e8"/><rect x="0.800" y="11" width="15.200" height="1.600" fill="#c8c8c8"/><circle cx="4" cy="13" r="1.500" fill="#222"/><circle cx="12.500" cy="13" r="1.500" fill="#222"/></svg>
<svg style="left:191px;top:724px" width="16" height="16" viewBox="0 0 16 16"><rect x="5" y="2" width="11" height="9" rx="1" fill="#d8d8d8"/><g fill="#fafafa"><rect x="6.2" y="2" width="1.5" height="9"/><rect x="9" y="2" width="1.5" height="9"/><rect x="11.8" y="2" width="1.5" height="9"/></g><g fill="#9a9a9a"><rect x="7.8" y="2" width="1" height="9"/><rect x="10.6" y="2" width="1" height="9"/><rect x="13.4" y="2" width="1" height="9"/></g><path d="M0.8 5.5h4.2v6.500h-4.2z" fill="#e8b830"/><rect x="1.500" y="6.300" width="2.400" height="2.200" fill="#6ab0e8"/><rect x="0.800" y="11" width="15.200" height="1.600" fill="#c8c8c8"/><circle cx="4" cy="13" r="1.500" fill="#222"/><circle cx="12.500" cy="13" r="1.500" fill="#222"/></svg>
<svg style="left:281px;top:724px" width="16" height="16" viewBox="0 0 16 16"><rect x="5" y="2" width="11" height="9" rx="1" fill="#d8d8d8"/><g fill="#fafafa"><rect x="6.2" y="2" width="1.5" height="9"/><rect x="9" y="2" width="1.5" height="9"/><rect x="11.8" y="2" width="1.5" height="9"/></g><g fill="#9a9a9a"><rect x="7.8" y="2" width="1" height="9"/><rect x="10.6" y="2" width="1" height="9"/><rect x="13.4" y="2" width="1" height="9"/></g><path d="M0.8 5.5h4.2v6.500h-4.2z" fill="#e8b830"/><rect x="1.500" y="6.300" width="2.400" height="2.200" fill="#6ab0e8"/><rect x="0.800" y="11" width="15.200" height="1.600" fill="#c8c8c8"/><circle cx="4" cy="13" r="1.500" fill="#222"/><circle cx="12.500" cy="13" r="1.500" fill="#222"/></svg>
<svg style="left:371px;top:724px" width="16" height="16" viewBox="0 0 16 16"><rect x="5" y="2" width="11" height="9" rx="1" fill="#d8d8d8"/><g fill="#fafafa"><rect x="6.2" y="2" width="1.5" height="9"/><rect x="9" y="2" width="1.5" height="9"/><rect x="11.8" y="2" width="1.5" height="9"/></g><g fill="#9a9a9a"><rect x="7.8" y="2" width="1" height="9"/><rect x="10.6" y="2" width="1" height="9"/><rect x="13.4" y="2" width="1" height="9"/></g><path d="M0.8 5.5h4.2v6.500h-4.2z" fill="#e8b830"/><rect x="1.500" y="6.300" width="2.400" height="2.200" fill="#6ab0e8"/><rect x="0.800" y="11" width="15.200" height="1.600" fill="#c8c8c8"/><circle cx="4" cy="13" r="1.500" fill="#222"/><circle cx="12.500" cy="13" r="1.500" fill="#222"/></svg>
<svg style="left:462px;top:724px" width="16" height="16" viewBox="0 0 16 16"><path d="M1.500 1l3.500 2.500h6l3.500-2.500v8c0 4-2.500 5.500-6.500 5.500s-6.500-1.500-6.500-5.500z" fill="#d98f3c"/><path d="M2 2l2.300 2.200l-2 1.300z M14 2l-2.300 2.200l2 1.300z" fill="#8a4a1a"/><path d="M3.500 9.500c0 3 2 4.500 4.500 4.500s4.500-1.500 4.500-4.500c-1.500-1-2.500-.5-3.200.8h-2.600c-.7-1.300-1.700-1.800-3.200-.8z" fill="#fbe9cc"/><circle cx="5.300" cy="7.200" r="1" fill="#222"/><circle cx="10.700" cy="7.200" r="1" fill="#222"/><path d="M7.100 10.300h1.800l-.9 1.100z" fill="#402010"/></svg>
<svg style="left:551px;top:724px" width="16" height="16" viewBox="0 0 16 16"><text x="0" y="12" font-family="Liberation Serif,serif" font-size="11" fill="#0e0e0e">[<tspan fill="#7a1515" font-style="italic">x</tspan>=]</text></svg>
<svg style="left:653px;top:724px" width="16" height="16" viewBox="0 0 16 16"><path d="M3.500 14.500L10.800 5.200C12.300 3.200 11.200 1 9 1C7.300 1 6.200 2.200 6.200 3.800" fill="none" stroke="#e23b3b" stroke-width="2.300" stroke-linecap="round"/><path d="M3.500 14.500L10.800 5.200C12.300 3.200 11.200 1 9 1C7.300 1 6.200 2.200 6.200 3.800" fill="none" stroke="#ffe6e6" stroke-width="2.300" stroke-dasharray="1.400 2.600" stroke-dashoffset="-1.500"/></svg>
<div class="a" style="left:2px;top:748px;width:1527px;height:15px;background:#1f1f1f;border:1px solid #2b2b2b"></div>
<div class="a" style="left:74px;top:749px;width:2px;height:13px;background:#2a2a2a"></div>
<div class="a" style="left:458px;top:749px;width:2px;height:13px;background:#2a2a2a"></div>
<div class="a" style="left:594px;top:749px;width:2px;height:13px;background:#2a2a2a"></div>
<div class="u" style="left:8px;top:750px;line-height:14px">地址</div>
<div class="u" style="left:80px;top:750px;line-height:14px">十六进制</div>
<div class="m" style="left:463px;top:751px">ASCII</div>
<div class="a" id="dump" style="left:0;top:764px;width:1530px;height:223px;overflow:hidden">
<div class="vl" style="left:74px;top:0;height:221px"></div>
<div class="vl" style="left:171px;top:0;height:221px"></div>
<div class="vl" style="left:267px;top:0;height:221px"></div>
<div class="vl" style="left:363px;top:0;height:221px"></div>
<div class="vl" style="left:458px;top:0;height:221px"></div>
<div class="vl" style="left:594px;top:0;height:221px"></div>
<div class="a" style="left:76px;top:1px;width:23px;height:13px;background:#414141"></div>
<div class="a" style="left:462px;top:1px;width:4px;height:13px;background:#414141"></div>
<div class="m g" style="left:8px;top:1px">77951000</div>
<div class="m" style="left:80px;top:1px;height:13px;width:88px">36 00 38 00</div>
<div class="m ur" style="left:176px;top:1px;height:13px;width:88px">94 D9 95 77</div>
<div class="m" style="left:272px;top:1px;height:13px;width:88px">1C 00 1E 00</div>
<div class="m ur" style="left:368px;top:1px;height:13px;width:88px">60 D9 95 77</div>
<div class="m" style="left:463px;top:1px">6.8..Ù.w....`Ù.w</div>
<div class="m g" style="left:8px;top:14px">77951010</div>
<div class="m" style="left:80px;top:14px;height:13px;width:88px">28 00 2A 00</div>
<div class="m ur" style="left:176px;top:14px;height:13px;width:88px">34 D9 95 77</div>
<div class="m" style="left:272px;top:14px;height:13px;width:88px">34 00 36 00</div>
<div class="m ur" style="left:368px;top:14px;height:13px;width:88px">FC D8 95 77</div>
<div class="m" style="left:463px;top:14px">(.*.4Ù.w4.6.üØ.w</div>
<div class="m g" style="left:8px;top:27px">77951020</div>
<div class="m" style="left:80px;top:27px;height:13px;width:88px">1E 00 20 00</div>
<div class="m ur" style="left:176px;top:27px;height:13px;width:88px">DC D8 95 77</div>
<div class="m" style="left:272px;top:27px;height:13px;width:88px">1A 00 1C 00</div>
<div class="m ur" style="left:368px;top:27px;height:13px;width:88px">C0 D8 95 77</div>
<div class="m" style="left:463px;top:27px">.. .ÜØ.w....ÀØ.w</div>
<div class="m g" style="left:8px;top:40px">77951030</div>
<div class="m ub" style="left:80px;top:40px;height:13px;width:88px">18 00 1A 00</div>
<div class="m ur" style="left:176px;top:40px;height:13px;width:88px">A4 D8 95 77</div>
<div class="m" style="left:272px;top:40px;height:13px;width:88px">20 00 22 00</div>
<div class="m ur" style="left:368px;top:40px;height:13px;width:88px">80 D8 95 77</div>
<div class="m" style="left:463px;top:40px">....¤Ø.w ."..Ø.w</div>
<div class="m g" style="left:8px;top:53px">77951040</div>
<div class="m" style="left:80px;top:53px;height:13px;width:88px">30 00 32 00</div>
<div class="m ur" style="left:176px;top:53px;height:13px;width:88px">4C D8 95 77</div>
<div class="m" style="left:272px;top:53px;height:13px;width:88px">2C 00 2E 00</div>
<div class="m ur" style="left:368px;top:53px;height:13px;width:88px">1C D8 95 77</div>
<div class="m" style="left:463px;top:53px">0.2.LØ.w,....Ø.w</div>
<div class="m g" style="left:8px;top:66px">77951050</div>
<div class="m" style="left:80px;top:66px;height:13px;width:88px">20 00 22 00</div>
<div class="m ur" style="left:176px;top:66px;height:13px;width:88px">F8 D7 95 77</div>
<div class="m ub" style="left:272px;top:66px;height:13px;width:88px">18 00 1A 00</div>
<div class="m ur" style="left:368px;top:66px;height:13px;width:88px">DC D7 95 77</div>
<div class="m" style="left:463px;top:66px"> .".ø×.w....Ü×.w</div>
<div class="m g" style="left:8px;top:79px">77951060</div>
<div class="m" style="left:80px;top:79px;height:13px;width:88px">10 00 12 00</div>
<div class="m ur" style="left:176px;top:79px;height:13px;width:88px">C8 D7 95 77</div>
<div class="m" style="left:272px;top:79px;height:13px;width:88px">16 00 18 00</div>
<div class="m ur" style="left:368px;top:79px;height:13px;width:88px">B0 8B 95 77</div>
<div class="m" style="left:463px;top:79px">....È×.w....°..w</div>
<div class="m g" style="left:8px;top:92px">77951070</div>
<div class="m" style="left:80px;top:92px;height:13px;width:88px">14 00 16 00</div>
<div class="m ur" style="left:176px;top:92px;height:13px;width:88px">28 84 95 77</div>
<div class="m ub" style="left:272px;top:92px;height:13px;width:88px">00 00 02 00</div>
<div class="m ur" style="left:368px;top:92px;height:13px;width:88px">70 5B 95 77</div>
<div class="m" style="left:463px;top:92px">....(..w....p[.w</div>
<div class="m g" style="left:8px;top:105px">77951080</div>
<div class="m" style="left:80px;top:105px;height:13px;width:88px">06 00 08 00</div>
<div class="m ur" style="left:176px;top:105px;height:13px;width:88px">A0 8D 95 77</div>
<div class="m" style="left:272px;top:105px;height:13px;width:88px">06 00 08 00</div>
<div class="m ur" style="left:368px;top:105px;height:13px;width:88px">B0 8D 95 77</div>
<div class="m" style="left:463px;top:105px">.... ..w....°..w</div>
<div class="m g" style="left:8px;top:118px">77951090</div>
<div class="m" style="left:80px;top:118px;height:13px;width:88px">06 00 08 00</div>
<div class="m ur" style="left:176px;top:118px;height:13px;width:88px">A8 8D 95 77</div>
<div class="m" style="left:272px;top:118px;height:13px;width:88px">06 00 08 00</div>
<div class="m ur" style="left:368px;top:118px;height:13px;width:88px">B8 8D 95 77</div>
<div class="m" style="left:463px;top:118px">....¨..w....¸..w</div>
<div class="m g" style="left:8px;top:131px">779510A0</div>
<div class="m" style="left:80px;top:131px;height:13px;width:88px">08 00 0A 00</div>
<div class="m ur" style="left:176px;top:131px;height:13px;width:88px">60 83 95 77</div>
<div class="m" style="left:272px;top:131px;height:13px;width:88px">1C 00 1E 00</div>
<div class="m ur" style="left:368px;top:131px;height:13px;width:88px">5C 84 95 77</div>
<div class="m" style="left:463px;top:131px">....`..w....\..w</div>
<div class="m g" style="left:8px;top:144px">779510B0</div>
<div class="m" style="left:80px;top:144px;height:13px;width:88px">22 00 24 00</div>
<div class="m ur" style="left:176px;top:144px;height:13px;width:88px">90 8C 95 77</div>
<div class="m" style="left:272px;top:144px;height:13px;width:88px">2A 00 2C 00</div>
<div class="m ur" style="left:368px;top:144px;height:13px;width:88px">B4 8C 95 77</div>
<div class="m" style="left:463px;top:144px">".$....w*.,.´..w</div>
<div class="m g" style="left:8px;top:157px">779510C0</div>
<div class="m ur" style="left:80px;top:157px;height:13px;width:88px">20 0E 98 77</div>
<div class="m ur" style="left:176px;top:157px;height:13px;width:88px">30 09 98 77</div>
<div class="m" style="left:272px;top:157px;height:13px;width:88px">00 00 00 00</div>
<div class="m ur" style="left:368px;top:157px;height:13px;width:88px">C0 DB A4 77</div>
<div class="m" style="left:463px;top:157px"> ..w0..w....ÀÛ¤w</div>
<div class="m g" style="left:8px;top:170px">779510D0</div>
<div class="m ur" style="left:80px;top:170px;height:13px;width:88px">40 18 98 77</div>
<div class="m ur" style="left:176px;top:170px;height:13px;width:88px">50 1A 98 77</div>
<div class="m ur" style="left:272px;top:170px;height:13px;width:88px">90 12 98 77</div>
<div class="m ur" style="left:368px;top:170px;height:13px;width:88px">70 71 98 77</div>
<div class="m" style="left:463px;top:170px">@..wP..w...wpq.w</div>
<div class="m g" style="left:8px;top:183px">779510E0</div>
<div class="m" style="left:80px;top:183px;height:13px;width:88px">00 00 00 00</div>
<div class="m" style="left:176px;top:183px;height:13px;width:88px">00 00 00 00</div>
<div class="m ur" style="left:272px;top:183px;height:13px;width:88px">60 24 98 77</div>
<div class="m ur" style="left:368px;top:183px;height:13px;width:88px">30 09 98 77</div>
<div class="m" style="left:463px;top:183px">........`$.w0..w</div>
<div class="m g" style="left:8px;top:196px">779510F0</div>
<div class="m" style="left:80px;top:196px;height:13px;width:88px">00 00 00 00</div>
<div class="m ur" style="left:176px;top:196px;height:13px;width:88px">C0 E9 A4 77</div>
<div class="m ur" style="left:272px;top:196px;height:13px;width:88px">F0 20 98 77</div>
<div class="m ur" style="left:368px;top:196px;height:13px;width:88px">40 EA A4 77</div>
<div class="m" style="left:463px;top:196px">....Àé¤wð .w@ê¤w</div>
<div class="m g" style="left:8px;top:209px">77951100</div>
<div class="m ur" style="left:80px;top:209px;height:13px;width:88px">40 98 98 77</div>
<div class="m ur" style="left:176px;top:209px;height:13px;width:88px">40 EA A4 77</div>
<div class="m ur" style="left:272px;top:209px;height:13px;width:88px">50 A9 97 77</div>
<div class="m ur" style="left:368px;top:209px;height:13px;width:88px">80 E8 A4 77</div>
<div class="m" style="left:463px;top:209px">@..w@ê¤wP©.w.è¤w</div>
</div>
<svg style="left:1533px;top:752.5px" width="10" height="8" viewBox="0 0 10 8"><path d="M5 0.5L9 7.5H1z" fill="#9a9a9a"/></svg>
<div class="sb" style="left:1533px;top:764.5px;width:10px;height:204.0px"></div>
<div class="th" style="left:1533px;top:764.5px;width:10px;height:23.0px"></div>
<svg style="left:1533px;top:972.5px" width="10" height="8" viewBox="0 0 10 8"><path d="M5 7.5L9 0.5H1z" fill="#9a9a9a"/></svg>
<div class="a" style="left:1549px;top:719px;width:1px;height:268px;background:#4a4a4a"></div>
<div class="a" style="left:1528px;top:764px;width:1px;height:222px;background:#505050"></div>
<div class="a" style="left:1742px;top:102px;width:817px;height:26px;border:1px solid #303030;background:#212121"></div>
<div class="u" style="left:2124px;top:108px;line-height:14px">隐藏<span class="mf">FPU</span></div>
<div class="r" style="left:1750px;top:134px"><span class="p">EAX</span>   <span class="s" style="background:#414141">0019FFCC</span></div>
<div class="r" style="left:1750px;top:148px"><span class="p">EBX</span>   003C4000</div>
<div class="r" style="left:1750px;top:162px"><span class="p">ECX</span>   <span class="s">00401000</span>     <span class="pk">"j"</span></div>
<div class="r" style="left:1750px;top:176px"><span class="p">EDX</span>   <span class="s">00401000</span>     <span class="pk">"j"</span></div>
<div class="r" style="left:1750px;top:190px"><span class="p">EBP</span>   <span class="s">0019FF80</span></div>
<div class="r" style="left:1750px;top:204px"><span class="p">ESP</span>   <span class="s">0019FF74</span></div>
<div class="r" style="left:1750px;top:218px"><span class="p">ESI</span>   <span class="s">00401000</span>     <span class="pk">"j"</span></div>
<div class="r" style="left:1750px;top:232px"><span class="p">EDI</span>   <span class="s">00401000</span>     <span class="pk">"j"</span></div>
<div class="r" style="left:1750px;top:260px"><span class="p">EIP</span>   <span class="s">00401000</span>     <span class="pk">&lt;crackme1.EntryPoint&gt;</span></div>
<div class="r" style="left:1750px;top:288px"><span class="p">EFLAGS</span>   <span class="s">00000244</span></div>
<div class="r" style="left:1750px;top:302px"><span class="p">ZF</span> 1  <span class="p">PF</span> 1  <span class="p">AF</span> 0</div>
<div class="r" style="left:1750px;top:316px"><span class="p">OF</span> 0  <span class="p">SF</span> 0  <span class="p">DF</span> 0</div>
<div class="r" style="left:1750px;top:330px"><span class="p">CF</span> 0  <span class="p">TF</span> 0  <span class="p">IF</span> 1</div>
<div class="r" style="left:1750px;top:358px"><span class="p">LastError</span>  <span class="s">0000007E (ERROR_MOD_NOT_FOUND)</span></div>
<div class="r" style="left:1750px;top:372px"><span class="p">LastStatus</span> 00000000 (STATUS_SUCCESS)</div>
<div class="r" style="left:1750px;top:400px"><span class="p">GS</span> 002B  <span class="p">FS</span> 0053</div>
<div class="r" style="left:1750px;top:414px"><span class="p">ES</span> 002B  <span class="p">DS</span><span class="a" style="left:72px;top:12px;width:16px;height:2px;background:#a6e22e"></span> 002B</div>
<div class="r" style="left:1750px;top:428px"><span class="p">CS</span> 0023  <span class="p">SS</span> 002B</div>
<div class="r" style="left:1750px;top:456px"><span class="p">ST(0)</span> 00000000000000000000 <span class="pk">x87r0</span><span class="a pk cj" style="left:264px;top:-2px;line-height:14px">空</span><span class="a pk" style="left:286px;top:0">0.000000000000000000</span></div>
<div class="r" style="left:1750px;top:470px"><span class="p">ST(1)</span> 00000000000000000000 <span class="pk">x87r1</span><span class="a pk cj" style="left:264px;top:-2px;line-height:14px">空</span><span class="a pk" style="left:286px;top:0">0.000000000000000000</span></div>
<div class="r" style="left:1750px;top:484px"><span class="p">ST(2)</span> 00000000000000000000 <span class="pk">x87r2</span><span class="a pk cj" style="left:264px;top:-2px;line-height:14px">空</span><span class="a pk" style="left:286px;top:0">0.000000000000000000</span></div>
<div class="r" style="left:1750px;top:498px"><span class="p">ST(3)</span> 00000000000000000000 <span class="pk">x87r3</span><span class="a pk cj" style="left:264px;top:-2px;line-height:14px">空</span><span class="a pk" style="left:286px;top:0">0.000000000000000000</span></div>
<div class="r" style="left:1750px;top:512px"><span class="p">ST(4)</span> 00000000000000000000 <span class="pk">x87r4</span><span class="a pk cj" style="left:264px;top:-2px;line-height:14px">空</span><span class="a pk" style="left:286px;top:0">0.000000000000000000</span></div>
<div class="r" style="left:1750px;top:526px"><span class="p">ST(5)</span> 00000000000000000000 <span class="pk">x87r5</span><span class="a pk cj" style="left:264px;top:-2px;line-height:14px">空</span><span class="a pk" style="left:286px;top:0">0.000000000000000000</span></div>
<div class="r" style="left:1750px;top:540px"><span class="p">ST(6)</span> 00000000000000000000 <span class="pk">x87r6</span><span class="a pk cj" style="left:264px;top:-2px;line-height:14px">空</span><span class="a pk" style="left:286px;top:0">0.000000000000000000</span></div>
<div class="r" style="left:1750px;top:554px"><span class="p">ST(7)</span> 00000000000000000000 <span class="pk">x87r7</span><span class="a pk cj" style="left:264px;top:-2px;line-height:14px">空</span><span class="a pk" style="left:286px;top:0">0.000000000000000000</span></div>
<svg style="left:2545px;top:132px" width="10" height="8" viewBox="0 0 10 8"><path d="M5 0.5L9 7.5H1z" fill="#9a9a9a"/></svg>
<div class="sb" style="left:2545px;top:144px;width:10px;height:414.5px"></div>
<div class="th" style="left:2545px;top:144px;width:10px;height:161px"></div>
<svg style="left:2545px;top:562.5px" width="10" height="8" viewBox="0 0 10 8"><path d="M5 7.5L9 0.5H1z" fill="#9a9a9a"/></svg>
<svg style="left:1745px;top:579px" width="8" height="10" viewBox="0 0 8 10"><path d="M0.5 5L8 0.5V9.5z" fill="#9a9a9a"/></svg>
<div class="sb" style="left:1757px;top:579px;width:767.5px;height:10px"></div>
<div class="th" style="left:1757px;top:579px;width:614.5px;height:10px"></div>
<svg style="left:2528.5px;top:579px" width="8" height="10" viewBox="0 0 8 10"><path d="M7.5 5L0 0.5V9.5z" fill="#9a9a9a"/></svg>
<div class="hl" style="left:1741px;top:593px;width:819px"></div>
<div class="u" style="left:1746px;top:601px;line-height:14px">默认<span class="la"> (stdcall)</span></div>
<svg style="left:2373px;top:605px" width="8" height="5" viewBox="0 0 8 5"><path d="M0 0h8L4 5z" fill="#9a9a9a"/></svg>
<div class="a" style="left:2389px;top:595px;width:101px;height:26px;background:#2c2c2c"></div>
<svg style="left:2393px;top:605px" width="8" height="5" viewBox="0 0 8 5"><path d="M0 0h8L4 5z" fill="#9a9a9a"/></svg>
<div class="u" style="left:2411px;top:601px;line-height:14px"><span class="la">5</span></div>
<svg style="left:2478px;top:605px" width="8" height="5" viewBox="0 0 8 5"><path d="M0 5h8L4 0z" fill="#9a9a9a"/></svg>
<div class="a" style="left:2494px;top:599px;width:16px;height:16px;border:1px solid #7a7a7a;border-radius:3px"></div>
<div class="u" style="left:2516px;top:600px;line-height:14px">解锁</div>
<div class="a" style="left:1743px;top:623px;width:797px;height:13px;background:#414141"></div>
<div class="m" style="left:1746px;top:623px">1: [esp+4] 003C4000</div>
<div class="m" style="left:1746px;top:636px">2: [esp+8] 76806340 &lt;kernel32.BaseThreadInitThunk&gt;</div>
<div class="m" style="left:1746px;top:649px">3: [esp+C] 0019FFDC</div>
<div class="m" style="left:1746px;top:662px">4: [esp+10] 779B8944 ntdll.779B8944</div>
<div class="m" style="left:1746px;top:675px">5: [esp+14] 003C4000</div>
<svg style="left:2544px;top:627.5px" width="10" height="8" viewBox="0 0 10 8"><path d="M5 0.5L9 7.5H1z" fill="#9a9a9a"/></svg>
<div class="sb" style="left:2544px;top:639.5px;width:10px;height:61.0px"></div>
<div class="th" style="left:2544px;top:639.5px;width:10px;height:61.0px"></div>
<svg style="left:2544px;top:704.5px" width="10" height="8" viewBox="0 0 10 8"><path d="M5 7.5L9 0.5H1z" fill="#9a9a9a"/></svg>
<div class="a" id="stack" style="left:1550px;top:719px;width:990px;height:250px;overflow:hidden">
<div class="a" style="left:1px;top:1px;width:989px;height:13px;background:#414141"></div>
<div class="vl" style="left:72px;top:0;height:248px"></div>
<div class="vl" style="left:146px;top:0;height:248px"></div>
<div class="a" style="left:74px;top:56px;width:2px;height:192px;background:#f08072"></div>
<div class="a" style="left:74px;top:55px;width:5px;height:2px;background:#f08072"></div>
<div class="m g" style="left:5px;top:1px;color:#a6e22e">0019FF74</div>
<div class="m" style="left:77px;top:1px">76806359</div>
<div class="m" style="left:151px;top:1px"><span class="pk">返回到 kernel32.76806359 自 ???</span></div>
<div class="m g" style="left:5px;top:14px;">0019FF78</div>
<div class="m" style="left:77px;top:14px">003C4000</div>
<div class="m g" style="left:5px;top:27px;color:#b39df3">0019FF7C</div>
<div class="m" style="left:77px;top:27px">76806340</div>
<div class="m" style="left:151px;top:27px">kernel32.76806340</div>
<div class="m g" style="left:5px;top:40px;">0019FF80</div>
<div class="m" style="left:77px;top:40px">0019FFDC</div>
<div class="m g" style="left:5px;top:53px;">0019FF84</div>
<div class="m" style="left:80px;top:53px">779B8944</div>
<div class="m" style="left:151px;top:53px"><span class="pk">返回到 ntdll.779B8944 自 ???</span></div>
<div class="m g" style="left:5px;top:66px;">0019FF88</div>
<div class="m" style="left:80px;top:66px">003C4000</div>
<div class="m g" style="left:5px;top:79px;">0019FF8C</div>
<div class="m" style="left:80px;top:79px">4EDDCD08</div>
<div class="m g" style="left:5px;top:92px;">0019FF90</div>
<div class="m" style="left:80px;top:92px">00000000</div>
<div class="m g" style="left:5px;top:105px;">0019FF94</div>
<div class="m" style="left:80px;top:105px">00000000</div>
<div class="m g" style="left:5px;top:118px;">0019FF98</div>
<div class="m" style="left:80px;top:118px">003C4000</div>
<div class="m g" style="left:5px;top:131px;">0019FF9C</div>
<div class="m" style="left:80px;top:131px">00000000</div>
<div class="m g" style="left:5px;top:144px;">0019FFA0</div>
<div class="m" style="left:80px;top:144px">00000000</div>
<div class="m g" style="left:5px;top:157px;">0019FFA4</div>
<div class="m" style="left:80px;top:157px">00000000</div>
<div class="m g" style="left:5px;top:170px;">0019FFA8</div>
<div class="m" style="left:80px;top:170px">00000000</div>
<div class="m g" style="left:5px;top:183px;">0019FFAC</div>
<div class="m" style="left:80px;top:183px">00000000</div>
<div class="m g" style="left:5px;top:196px;">0019FFB0</div>
<div class="m" style="left:80px;top:196px">00000000</div>
<div class="m g" style="left:5px;top:209px;">0019FFB4</div>
<div class="m" style="left:80px;top:209px">00000000</div>
<div class="m g" style="left:5px;top:222px;">0019FFB8</div>
<div class="m" style="left:80px;top:222px">00000000</div>
<div class="m g" style="left:5px;top:235px;">0019FFBC</div>
<div class="m" style="left:80px;top:235px">00000000</div>
</div>
<svg style="left:2544px;top:724px" width="10" height="8" viewBox="0 0 10 8"><path d="M5 0.5L9 7.5H1z" fill="#9a9a9a"/></svg>
<div class="sb" style="left:2544px;top:736px;width:10px;height:215.5px"></div>
<div class="th" style="left:2544px;top:927px;width:10px;height:24.5px"></div>
<svg style="left:2544px;top:955.5px" width="10" height="8" viewBox="0 0 10 8"><path d="M5 7.5L9 0.5H1z" fill="#9a9a9a"/></svg>
<svg style="left:1554px;top:972px" width="8" height="10" viewBox="0 0 8 10"><path d="M0.5 5L8 0.5V9.5z" fill="#9a9a9a"/></svg>
<div class="sb" style="left:1566px;top:972px;width:958px;height:10px"></div>
<div class="th" style="left:1567px;top:972px;width:343px;height:10px"></div>
<svg style="left:2528px;top:972px" width="8" height="10" viewBox="0 0 8 10"><path d="M7.5 5L0 0.5V9.5z" fill="#9a9a9a"/></svg>
<div class="u" style="left:1px;top:996px;line-height:14px">命令<span class="la">:</span></div>
<div class="a" style="left:38px;top:993px;width:2413px;height:20px;background:#323232"></div>
<div class="u" style="left:2460px;top:996px;line-height:14px">默认</div>
<svg style="left:2546px;top:1001px" width="8" height="5" viewBox="0 0 8 5"><path d="M0 0h8L4 5z" fill="#9a9a9a"/></svg>
<div class="u" style="left:13px;top:1022px;line-height:14px;color:#a3a340">已暂停</div>
<div class="u" style="left:66px;top:1022px;line-height:14px">断点已设置在<span class="la"> 7680A520 !</span></div>
<div class="u" style="left:2421px;top:1022px;line-height:14px">已调试时间<span class="la">: 0:16:35:30</span></div>
</body></html>
